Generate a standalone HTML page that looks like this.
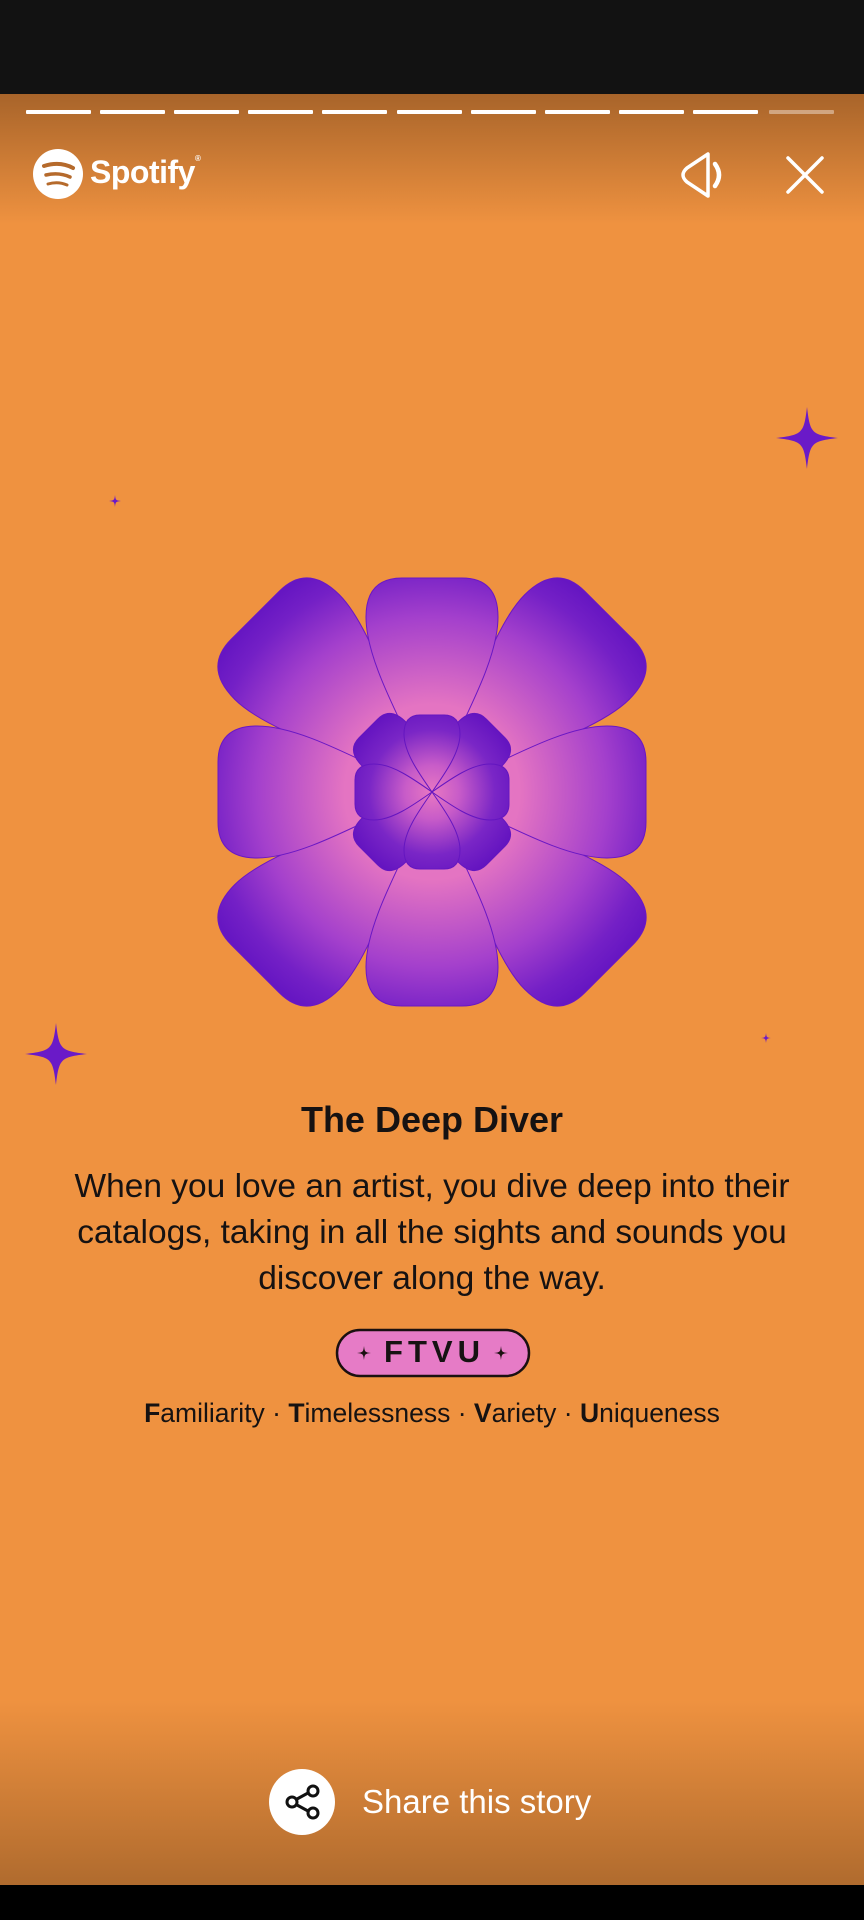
<!DOCTYPE html>
<html><head><meta charset="utf-8"><style>
*{margin:0;padding:0;box-sizing:border-box}
html,body{width:864px;height:1920px;overflow:hidden;background:#ef9240;font-family:"Liberation Sans",sans-serif}
.abs{position:absolute}
#top{left:0;top:0;width:864px;height:94px;background:#121212}
#bot{left:0;top:1885px;width:864px;height:35px;background:#000}
#hg{left:0;top:94px;width:864px;height:130px;background:linear-gradient(#a8642a,rgba(239,146,64,0))}
#bg{left:0;top:1700px;width:864px;height:185px;background:linear-gradient(rgba(239,146,64,0),#b06b2e)}
.seg{position:absolute;top:110px;height:4px;width:65px;background:#fff;border-radius:1px}
.t{position:absolute;left:0;width:864px;text-align:center;color:#161212}
</style></head><body>
<div id="top" class="abs"></div>
<div id="hg" class="abs"></div>
<div id="bg" class="abs"></div>
<div id="bot" class="abs"></div>

<div class="seg" style="left:26px"></div>
<div class="seg" style="left:100px"></div>
<div class="seg" style="left:174px"></div>
<div class="seg" style="left:248px"></div>
<div class="seg" style="left:322px"></div>
<div class="seg" style="left:397px"></div>
<div class="seg" style="left:471px"></div>
<div class="seg" style="left:545px"></div>
<div class="seg" style="left:619px"></div>
<div class="seg" style="left:693px"></div>
<div class="seg" style="left:769px;background:rgba(255,255,255,0.4)"></div>

<svg class="abs" style="left:0;top:0" width="864" height="1920" viewBox="0 0 864 1920">
<defs>
<radialGradient id="g" cx="0" cy="0" r="250" gradientUnits="userSpaceOnUse">
<stop offset="0" stop-color="#ea7cc0"/><stop offset="0.35" stop-color="#e474c2"/><stop offset="0.7" stop-color="#a440cc"/><stop offset="0.9" stop-color="#7420c6"/><stop offset="1" stop-color="#6616c2"/></radialGradient>
<radialGradient id="g2" cx="0" cy="0" r="90" gradientUnits="userSpaceOnUse">
<stop offset="0" stop-color="#e878c2"/><stop offset="0.3" stop-color="#c85cc8"/><stop offset="0.7" stop-color="#7a26c6"/><stop offset="1" stop-color="#6414c0"/></radialGradient>
<path id="po" d="M0,0 C-20,-55 -66,-125 -66,-175 Q-66,-214 -30,-214 L30,-214 Q66,-214 66,-175 C66,-125 20,-55 0,0Z"/>
<path id="pd" d="M0,0 C-22,-65 -74,-155 -74,-205 Q-74,-250 -34,-250 L34,-250 Q74,-250 74,-205 C74,-155 22,-65 0,0Z"/>
<path id="io" d="M0,0 C-14,-20 -28,-40 -28,-58 Q-28,-77 -12,-77 L12,-77 Q28,-77 28,-58 C28,-40 14,-20 0,0Z"/>
<path id="id" d="M0,0 C-15,-25 -31,-50 -31,-68 Q-31,-90 -13,-90 L13,-90 Q31,-90 31,-68 C31,-50 15,-25 0,0Z"/>
<path id="sp" d="M0,-1 C0.1,-0.15 0.15,-0.1 1,0 C0.15,0.1 0.1,0.15 0,1 C-0.1,0.15 -0.15,0.1 -1,0 C-0.15,-0.1 -0.1,-0.15 0,-1Z"/>
</defs>
<g fill="url(#g)" stroke="#6a18c4" stroke-width="1">
<g transform="translate(432 792)">
<use href="#pd" transform="rotate(45)"/><use href="#pd" transform="rotate(135)"/><use href="#pd" transform="rotate(225)"/><use href="#pd" transform="rotate(315)"/>
<use href="#po"/><use href="#po" transform="rotate(90)"/><use href="#po" transform="rotate(180)"/><use href="#po" transform="rotate(270)"/>
</g></g>
<g fill="url(#g2)" stroke="#6416c0" stroke-width="1">
<g transform="translate(432 792)">
<use href="#id" transform="rotate(45)"/><use href="#id" transform="rotate(135)"/><use href="#id" transform="rotate(225)"/><use href="#id" transform="rotate(315)"/>
<use href="#io"/><use href="#io" transform="rotate(90)"/><use href="#io" transform="rotate(180)"/><use href="#io" transform="rotate(270)"/>
</g></g>
<g fill="#6a1ac8">
<use href="#sp" transform="translate(807 438) scale(31)"/>
<use href="#sp" transform="translate(56 1054) scale(31)"/>
<use href="#sp" transform="translate(115 501) scale(6)"/>
<use href="#sp" transform="translate(766 1038) scale(5)"/>
</g>
<circle cx="58" cy="174" r="25" fill="#fff"/>
<g fill="none" stroke="#b56a2c" stroke-linecap="round">
<path d="M44 166 Q60 161 73 168" stroke-width="4"/>
<path d="M46 175 Q59 172 70 177" stroke-width="3.5"/>
<path d="M48 184 Q58 181 67 185" stroke-width="3"/>
</g>
<g fill="none" stroke="#fff" stroke-width="3.5" stroke-linejoin="round" stroke-linecap="round">
<path d="M708 154 L708 196 L687 182 Q679 175 687 168 Z"/>
<path d="M715 164 Q723 175 715 186" stroke-width="4.5"/>
</g>
<path d="M788 158 L822 192 M822 158 L788 192" stroke="#fff" stroke-width="3.5" stroke-linecap="round"/>
<rect x="337" y="1330" width="192" height="46" rx="23" fill="#e67bc6" stroke="#1a1010" stroke-width="2.5"/>
<g fill="#1a1010"><use href="#sp" transform="translate(364 1353) scale(7)"/><use href="#sp" transform="translate(501 1353) scale(7)"/></g>
<circle cx="302" cy="1802" r="33" fill="#fff"/>
<g stroke="#111" stroke-width="3" fill="none">
<circle cx="313" cy="1791" r="5"/><circle cx="313" cy="1813" r="5"/><circle cx="292" cy="1802" r="5"/>
<path d="M297 1799 L308 1793 M297 1805 L308 1811"/>
</g>
</svg>

<div class="abs" style="left:90px;top:154px;color:#fff;font-weight:bold;font-size:32px;letter-spacing:-0.5px">Spotify<span style="font-size:8px;vertical-align:top">®</span></div>

<div class="t" style="top:1099px;font-size:36px;font-weight:bold">The Deep Diver</div>
<div class="t" style="top:1164px;font-size:33.5px;line-height:46px">When you love an artist, you dive deep into their<br>catalogs, taking in all the sights and sounds you<br>discover along the way.</div>
<div class="t" style="top:1334px;font-size:31px;font-weight:bold;letter-spacing:5px;padding-left:5px">FTVU</div>
<div class="t" style="top:1398px;font-size:26.5px"><b>F</b>amiliarity · <b>T</b>imelessness · <b>V</b>ariety · <b>U</b>niqueness</div>
<div class="abs" style="left:362px;top:1783px;color:#fff;font-size:33px">Share this story</div>
</body></html>
